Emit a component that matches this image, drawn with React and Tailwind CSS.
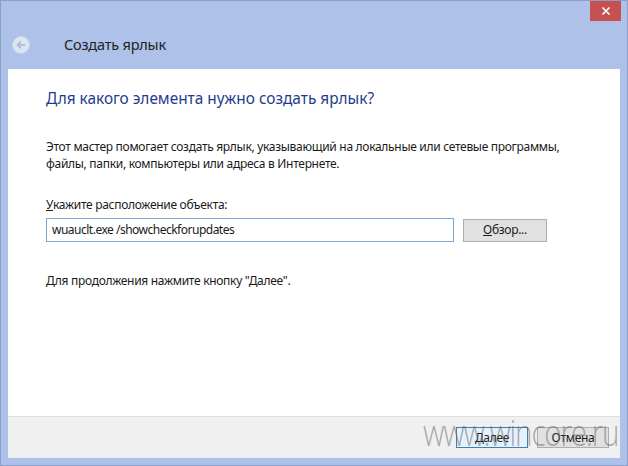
import React from 'react';

const font = { fontFamily: '"Segoe UI", "Noto Sans", "Open Sans", sans-serif' };

function BackButton() {
  return (
    <div className="w-[18px] h-[18px] rounded-full bg-[#dde5f3] border border-[#c9d4ea] flex items-center justify-center">
      <svg width="12" height="12" viewBox="0 0 12 12" fill="none">
        <path d="M10 6H2.5M5.5 3L2.5 6l3 3" stroke="#a9b7d2" strokeWidth="1.6" strokeLinecap="round" strokeLinejoin="round" />
      </svg>
    </div>
  );
}

export default function App() {
  return (
    <div
      className="relative w-[628px] h-[466px] bg-[#aec2e9] border border-[#8a9ecb] flex flex-col overflow-hidden text-[#1a1a1a]"
      style={font}
    >
      {/* title bar */}
      <div className="h-[20px] flex justify-end pr-[6px]">
        <button className="w-[31px] h-[20px] bg-[#c75050] flex items-center justify-center">
          <svg width="10" height="10" viewBox="0 0 10 10">
            <path d="M1.5 1.5l7 7M8.5 1.5l-7 7" stroke="#fff" strokeWidth="1.6" />
          </svg>
        </button>
      </div>

      {/* header */}
      <div className="h-[48px] flex items-center pl-[11px]">
        <BackButton />
        <span className="ml-[34px] text-[14.5px] tracking-[-0.2px] text-[#222]">Создать ярлык</span>
      </div>

      {/* content */}
      <div className="mx-[7px] flex-1 flex flex-col">
        <div className="flex-1 bg-white pl-[38px] pt-[20px] text-[12px] tracking-[-0.3px]">
          <h1 className="text-[15.4px] tracking-normal leading-[20px] text-[#1f3c8c]">Для какого элемента нужно создать ярлык?</h1>

          <p className="mt-[29px] leading-[17px]">
            Этот мастер помогает создать ярлык, указывающий на локальные или сетевые программы,
            <br />
            файлы, папки, компьютеры или адреса в Интернете.
          </p>

          <div className="mt-[24px] leading-[17px]">
            <span className="underline">У</span>кажите расположение объекта:
          </div>

          <div className="mt-[5px] flex items-center">
            <div className="w-[408px] h-[24px] border border-[#7aa7d1] flex items-center px-[5px] tracking-[-0.5px]">
              wuauclt.exe /showcheckforupdates
            </div>
            <button className="ml-[9px] w-[84px] h-[23px] bg-[#e1e1e1] border border-[#adadad]">
              <span className="underline">О</span>бзор...
            </button>
          </div>

          <p className="mt-[30px] leading-[17px]">
            Для продолжения нажмите кнопку "Далее".
          </p>
        </div>

        <div className="relative h-[42px] bg-[#f0f0f0] border-t border-[#dfdfdf] flex items-center justify-end pr-[11px] gap-[9px] text-[12px] tracking-[-0.3px]">
          <button className="w-[72px] h-[21px] bg-[#e5f1fb] border border-[#3c7fb1]">
            <span className="underline">Д</span>алее
          </button>
          <button className="w-[72px] h-[21px] bg-[#e1e1e1] border border-[#adadad]">
            Отмена
          </button>
          <div
            className="absolute left-[415px] top-[-7px] text-[37px] leading-[44px] font-light tracking-[-1.5px] scale-x-80 origin-left whitespace-nowrap text-[#6b6b6b]/55 pointer-events-none"
            style={{ fontFamily: '"Open Sans", "Noto Sans", sans-serif' }}
          >
            www.wincore.ru
          </div>
        </div>
      </div>

      <div className="h-[7px]" />
    </div>
  );
}
